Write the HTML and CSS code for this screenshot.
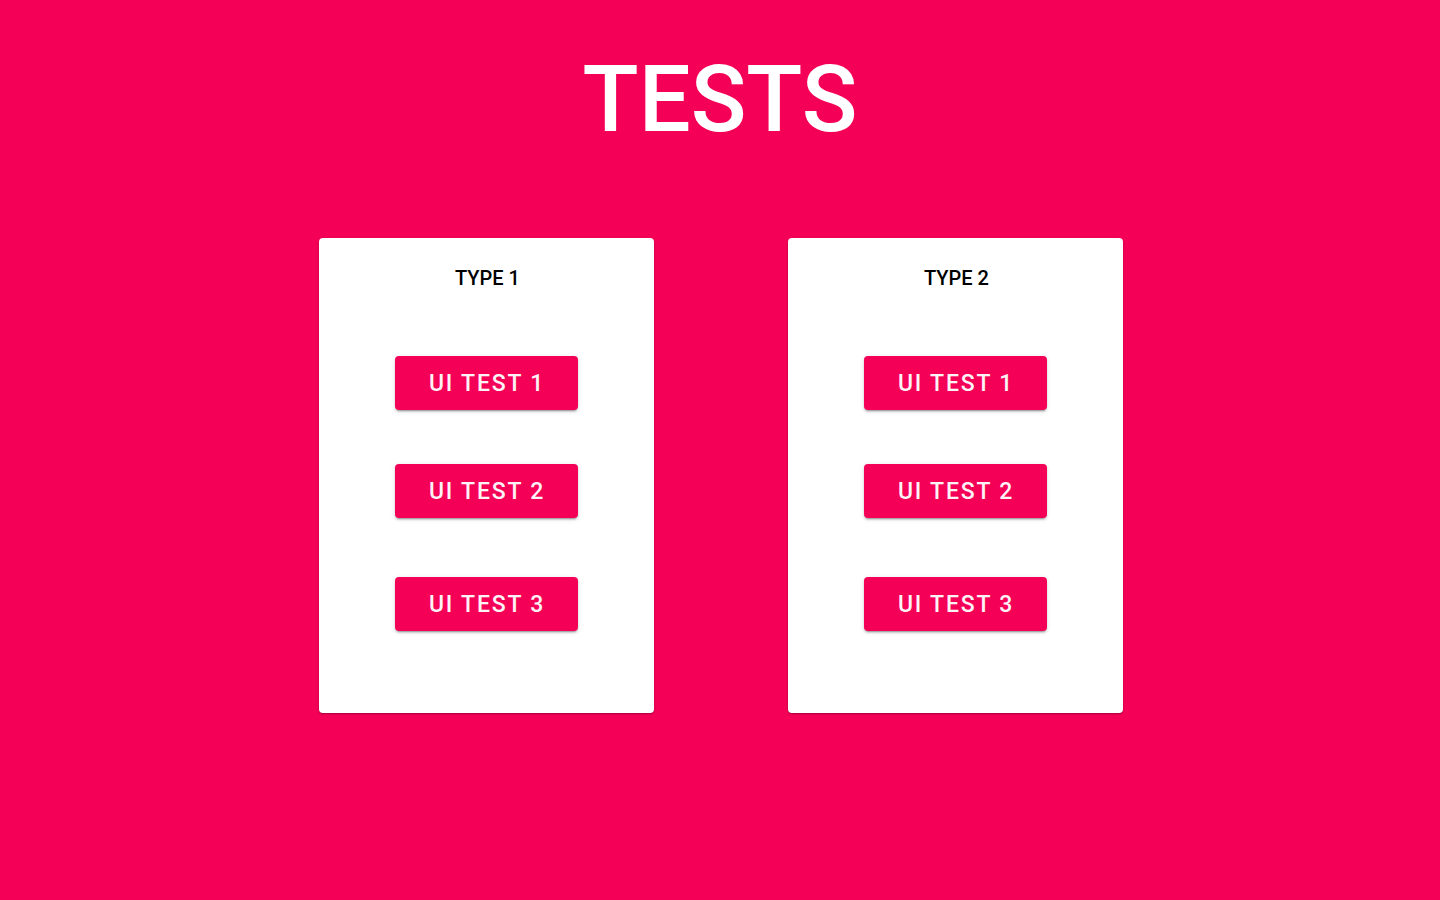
FILE: index.html
```html
<!DOCTYPE html>
<html lang="en">
<head>
<meta charset="utf-8">
<title>Tests</title>
<link rel="stylesheet" href="styles.css">
</head>
<body>
<main class="page">
  <h1 class="title">TESTS</h1>
  <div class="cards">
    <section class="card">
      <h2 class="card-title">TYPE 1</h2>
      <div class="buttons">
        <button class="btn">UI TEST 1</button>
        <button class="btn">UI TEST 2</button>
        <button class="btn btn-last">UI TEST 3</button>
      </div>
    </section>
    <section class="card">
      <h2 class="card-title">TYPE 2</h2>
      <div class="buttons">
        <button class="btn">UI TEST 1</button>
        <button class="btn">UI TEST 2</button>
        <button class="btn btn-last">UI TEST 3</button>
      </div>
    </section>
  </div>
</main>
</body>
</html>
```

FILE: styles.css
```css
html, body {
  margin: 0;
  padding: 0;
  height: 100%;
}
body {
  background: #f50057;
  font-family: Roboto, "Liberation Sans", Arial, sans-serif;
}
.page {
  display: flex;
  flex-direction: column;
  align-items: center;
  padding-top: 54px;
}
.title {
  margin: 0;
  font-size: 92px;
  line-height: 92px;
  font-weight: 500;
  color: #fff;
  letter-spacing: 0;
}
.cards {
  display: flex;
  gap: 134px;
  margin-top: 92px;
  padding-left: 2px;
}
.card {
  width: 335px;
  height: 475px;
  box-sizing: border-box;
  background: #fff;
  border-radius: 4px;
  box-shadow: 0 1px 3px rgba(0,0,0,0.2), 0 1px 1px rgba(0,0,0,0.14);
  display: flex;
  flex-direction: column;
  align-items: center;
  padding-top: 28px;
  padding-left: 2px;
}
.card-title {
  margin: 0;
  font-size: 20px;
  line-height: 24px;
  font-weight: 500;
  color: #000;
}
.buttons {
  display: flex;
  flex-direction: column;
  align-items: center;
  gap: 54px;
  margin-top: 66px;
  margin-left: -2px;
}
.btn {
  width: 183px;
  height: 54px;
  border: 0;
  border-radius: 4px;
  background: #f50057;
  color: #fdf2f6;
  font-family: Roboto, "Liberation Sans", Arial, sans-serif;
  font-size: 23px;
  font-weight: 500;
  letter-spacing: 1.8px;
  padding: 0 0 0 1px;
  box-shadow: 0 3px 1px -2px rgba(0,0,0,0.2), 0 2px 2px 0 rgba(0,0,0,0.14), 0 1px 5px 0 rgba(0,0,0,0.12);
  cursor: pointer;
}
.btn-last {
  margin-top: 5px;
}
```
